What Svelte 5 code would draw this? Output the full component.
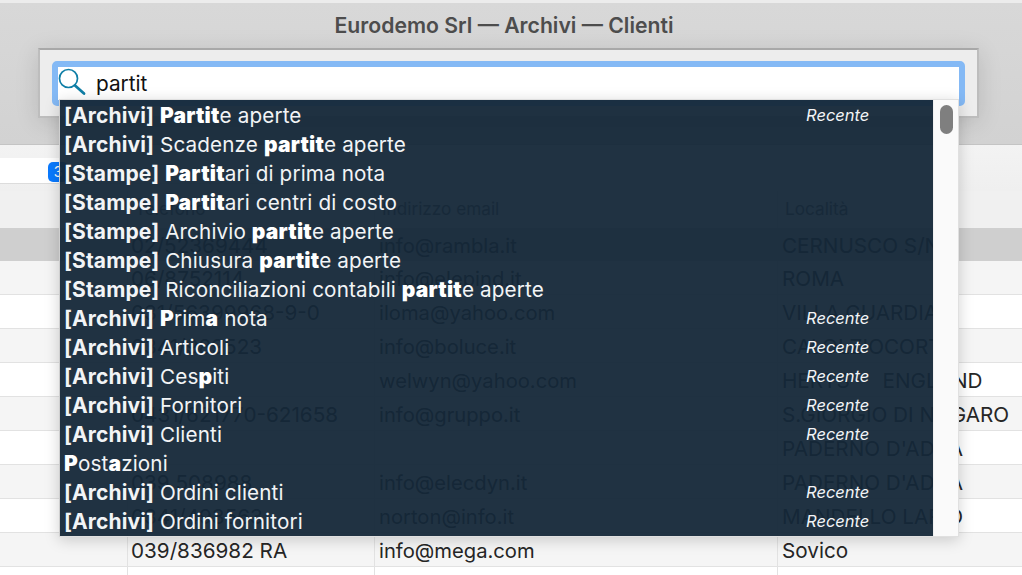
<script>
  const rows = [
    { tel: '02/52369444', mail: 'info@rambla.it', loc: 'CERNUSCO S/N', sel: true },
    { tel: '06/8752114', mail: 'info@elepind.it', loc: 'ROMA', alt: true },
    { tel: '031/56399968-9-0', mail: 'iloma@yahoo.com', loc: 'VILLA GUARDIA' },
    { tel: '0341/989523', mail: 'info@boluce.it', loc: 'CALOLZIOCORTE', alt: true },
    { tel: '', mail: 'welwyn@yahoo.com', loc: 'HERTS - \u00a0\u00a0ENGLAND' },
    { tel: '0431/621770-621658', mail: 'info@gruppo.it', loc: 'S.GIORGIO DI NOGARO', alt: true },
    { tel: '', mail: '', loc: "PADERNO D'ADDA" },
    { tel: '039 508988', mail: 'info@elecdyn.it', loc: "PADERNO D'ADDA", alt: true },
    { tel: '0341/493563', mail: 'norton@info.it', loc: 'MANDELLO LARIO' },
    { tel: '039/836982 RA', mail: 'info@mega.com', loc: 'Sovico', alt: true },
    { tel: '', mail: '', loc: '' }
  ];
  const items = [
    { tag: '[Archivi]', parts: [['Partit', 1], ['e aperte', 0]], recent: true },
    { tag: '[Archivi]', parts: [['Scadenze ', 0], ['partit', 1], ['e aperte', 0]] },
    { tag: '[Stampe]', parts: [['Partit', 1], ['ari di prima nota', 0]] },
    { tag: '[Stampe]', parts: [['Partit', 1], ['ari centri di costo', 0]] },
    { tag: '[Stampe]', parts: [['Archivio ', 0], ['partit', 1], ['e aperte', 0]] },
    { tag: '[Stampe]', parts: [['Chiusura ', 0], ['partit', 1], ['e aperte', 0]] },
    { tag: '[Stampe]', parts: [['Riconciliazioni contabili ', 0], ['partit', 1], ['e aperte', 0]] },
    { tag: '[Archivi]', parts: [['P', 1], ['rim', 0], ['a', 1], [' nota', 0]], recent: true },
    { tag: '[Archivi]', parts: [['Articoli', 0]], recent: true },
    { tag: '[Archivi]', parts: [['Ces', 0], ['p', 1], ['iti', 0]], recent: true },
    { tag: '[Archivi]', parts: [['Fornitori', 0]], recent: true },
    { tag: '[Archivi]', parts: [['Clienti', 0]], recent: true },
    { tag: '', parts: [['P', 1], ['ost', 0], ['a', 1], ['zioni', 0]] },
    { tag: '[Archivi]', parts: [['Ordini clienti', 0]], recent: true },
    { tag: '[Archivi]', parts: [['Ordini fornitori', 0]], recent: true }
  ];
</script>

<div class="app">
  <header class="titlebar">
    <div class="title">Eurodemo Srl — Archivi — Clienti</div>
  </header>

  <div class="filter">
    <div class="filter-field"><span class="badge">3</span></div>
  </div>

  <div class="table">
    <div class="row head">
      <div class="cell first"></div>
      <div class="cell">Telefono</div>
      <div class="cell">Indirizzo email</div>
      <div class="cell">Località</div>
    </div>
    {#each rows as r}
      <div class="row" class:sel={r.sel} class:alt={r.alt}>
        <div class="cell first"></div>
        <div class="cell">{r.tel}</div>
        <div class="cell mail">{r.mail}</div>
        <div class="cell">{r.loc}</div>
      </div>
    {/each}
  </div>

  <div class="sheet">
    <div class="search">
      <svg class="lens" width="30" height="30" viewBox="0 0 30 30" fill="none" stroke="#0f7ea6">
        <circle cx="10.5" cy="11.5" r="9" stroke-width="1.7" />
        <path d="M17 18.5 L26 26.5" stroke-width="2.8" stroke-linecap="round" />
      </svg>
      <span class="query">partit</span>
    </div>
  </div>

  <div class="dropdown">
    <ul class="list">
      {#each items as it}
        <li class="item">
          <span class="label">
            {#if it.tag}<b class="tag">{it.tag}</b>{' '}{/if}{#each it.parts as p}{#if p[1]}<b class="hit">{p[0]}</b>{:else}{p[0]}{/if}{/each}
          </span>
          {#if it.recent}<i class="recent">Recente</i>{/if}
        </li>
      {/each}
    </ul>
    <div class="track"><div class="thumb"></div></div>
  </div>
</div>

<style>
  :global(body) { margin: 0; background: #fff; }
  .app {
    position: relative;
    width: 1022px;
    height: 575px;
    overflow: hidden;
    font-family: Inter, "Liberation Sans", sans-serif;
    background: #fff;
  }
  .titlebar {
    height: 145px;
    box-sizing: border-box;
    padding-top: 11px;
    background: linear-gradient(#d8d8d8, #d2d2d2);
    border-top: 3px solid #ececec;
    border-bottom: 1px solid #c4c4c4;
    text-align: center;
  }
  .title {
    font-size: 21.2px;
    font-weight: 600;
    line-height: 22px;
    color: #4d4d4d;
    padding-right: 14px;
  }
  .filter {
    height: 46px;
    box-sizing: border-box;
    padding-top: 13px;
    background: linear-gradient(#f3f3f3, #efefef);
  }
  .filter-field {
    width: 320px;
    height: 26px;
    box-sizing: border-box;
    background: #fff;
    border-bottom: 1px solid #dcdcdc;
    position: relative;
  }
  .badge {
    position: absolute;
    left: 48px;
    top: 4px;
    width: 20px;
    height: 20px;
    border-radius: 5px;
    background: #0a7aff;
    color: #fff;
    font-size: 14px;
    line-height: 20px;
    text-align: center;
  }
  .row {
    display: grid;
    grid-template-columns: 127px 247px 403px 1fr;
    height: 34px;
    box-sizing: border-box;
    border-bottom: 1px solid #e2e2e2;
    font-size: 20.7px;
    line-height: 35px;
    color: #262626;
    white-space: nowrap;
  }
  .row.alt { background: #f5f5f5; }
  .row.sel { background: #cfcfcf; height: 33px; border-bottom: 0; }
  .row.head {
    height: 37px;
    background: #f0f0f0;
    font-size: 17.2px;
    line-height: 36px;
    color: #555;
    border-bottom: 0;
  }
  .cell {
    padding-left: 4px;
    border-left: 1px solid #e2e2e2;
    overflow: hidden;
  }
  .cell.first { border-left: 0; padding: 0; }
  .cell:nth-child(2) { padding-left: 3px; }
  .cell.mail { font-size: 20.2px; }
  .row.head .cell:not(.first) { padding-left: 7px; font-size: 17.2px; }
  .sel .cell { border-left-color: transparent; }

  .sheet {
    position: absolute;
    left: 38px;
    top: 48px;
    width: 941px;
    height: 70px;
    box-sizing: border-box;
    padding: 11px 12px;
    background: #ededed;
    border: 2px solid #bdbdbd;
    border-top-color: #a8a8a8;
    box-shadow: 0 4px 22px rgba(0, 0, 0, .13);
  }
  .search {
    height: 45px;
    box-sizing: border-box;
    display: flex;
    align-items: flex-start;
    background: #fff;
    border: 6px solid #84b9f5;
    border-radius: 5px;
  }
  .lens { flex: none; }
  .query {
    margin-left: 8px;
    font-size: 20.8px;
    line-height: 33px;
    color: #111;
  }
  .dropdown {
    position: absolute;
    left: 59px;
    top: 99px;
    width: 900px;
    height: 438px;
    box-sizing: border-box;
    display: flex;
    border: 1px solid #e0e0e0;
    border-left-color: #cfcfcf;
    box-shadow: 0 3px 14px rgba(0, 0, 0, .18);
  }
  .list {
    list-style: none;
    margin: 0;
    padding: 1px 0 0;
    width: 873px;
    background: rgba(20, 39, 56, .95);
    color: #f2f4f6;
  }
  .item {
    position: relative;
    height: 29px;
    line-height: 29px;
    padding-left: 4px;
    font-size: 20.7px;
    letter-spacing: .12px;
    white-space: nowrap;
  }
  .tag { font-weight: 700; font-size: 21px; }
  .hit { font-weight: 900; font-size: 21px; letter-spacing: .2px; color: #fff; }
  .recent {
    position: absolute;
    left: 746px;
    top: 0;
    font-size: 16.5px;
    letter-spacing: 0;
    color: #f2f4f6;
  }
  .track { flex: 1; position: relative; background: #fafafa; border-left: 1px solid #f0f0f0; }
  .thumb {
    position: absolute;
    left: 6px;
    top: 5px;
    width: 13px;
    height: 29px;
    border-radius: 7px;
    background: #7f7f7f;
  }
</style>
